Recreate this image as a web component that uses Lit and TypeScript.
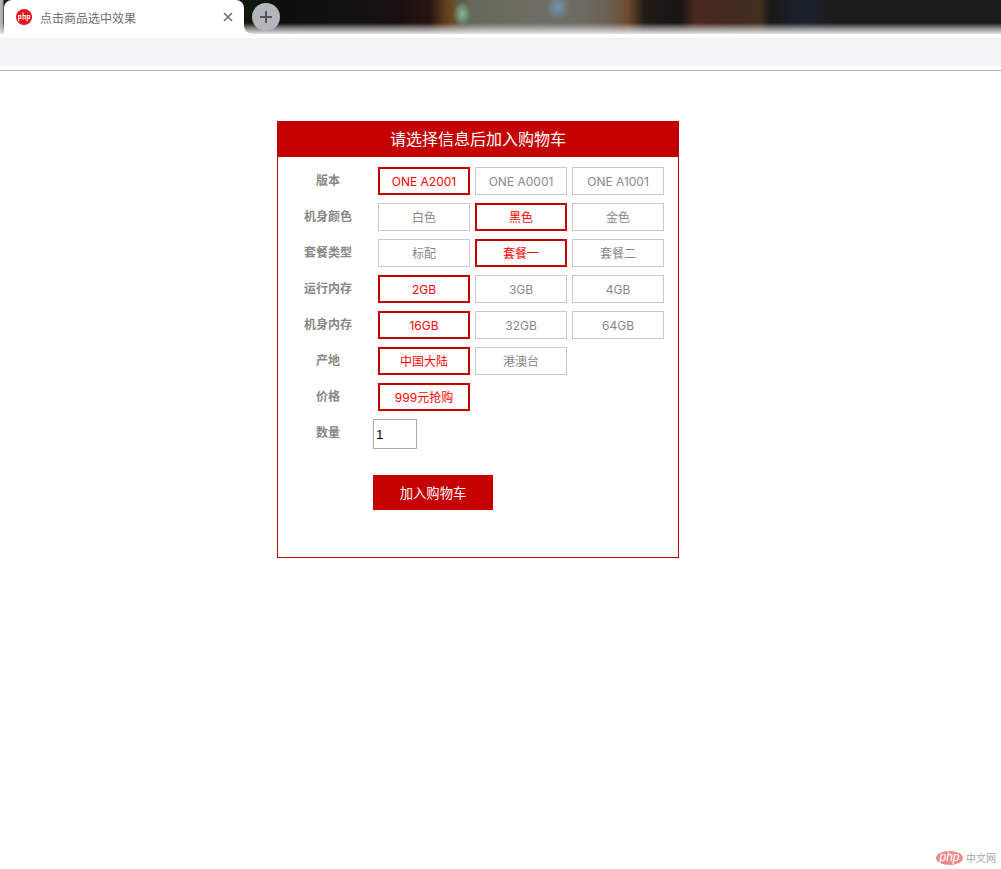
import { LitElement, html, css } from "lit";
import { customElement } from "lit/decorators.js";

interface Row { label: string; options: string[]; active: number; }

const ROWS: Row[] = [
  { label: "版本", options: ["ONE A2001", "ONE A0001", "ONE A1001"], active: 0 },
  { label: "机身颜色", options: ["白色", "黑色", "金色"], active: 1 },
  { label: "套餐类型", options: ["标配", "套餐一", "套餐二"], active: 1 },
  { label: "运行内存", options: ["2GB", "3GB", "4GB"], active: 0 },
  { label: "机身内存", options: ["16GB", "32GB", "64GB"], active: 0 },
  { label: "产地", options: ["中国大陆", "港澳台"], active: 0 },
  { label: "价格", options: ["999元抢购"], active: 0 },
];

@customElement("app-root")
export class AppRoot extends LitElement {
  static styles = css`
    :host {
      display: block;
      width: 1001px;
      height: 869px;
      position: relative;
      overflow: hidden;
      background: #fff;
      font-family: "Inter", "Noto Sans CJK SC", sans-serif;
    }
    .tabstrip {
      height: 34px;
      display: flex;
      align-items: flex-start;
      background:
        linear-gradient(to bottom, rgba(225,225,225,0) 0, rgba(225,225,225,0) 23px, rgba(190,190,190,.65) 28px, rgba(238,238,238,.95) 34px),
        radial-gradient(ellipse 9px 13px at 462px 14px, rgba(135,195,145,.95), rgba(135,195,145,0)),
        radial-gradient(ellipse 12px 13px at 558px 7px, rgba(115,150,180,.95), rgba(115,150,180,0)),
        linear-gradient(to right, #c0bcb8 0, #a0a0a0 3px, #1a1510 4px, #1a1510 244px, #0c1a0c 250px, #0e0e0e 285px, #111 340px, #1a0f10 400px, #251510 430px, #5f3d1c 445px, #6a4a22 452px, #5c5648 458px, #66685c 472px, #6f6e64 540px, #6c6c64 575px, #6b5f52 610px, #6f4a2e 628px, #201a16 645px, #181414 680px, #4a2a20 695px, #45281e 715px, #41301f 760px, #1b1918 770px, #1a2230 805px, #1c1c1c 830px, #1c1c1c 1001px);
    }
    .tabgap { height: 4px; background: #fff; }
    .tab {
      width: 240px;
      height: 38px;
      margin-left: 4px;
      box-sizing: border-box;
      flex: none;
      display: flex;
      align-items: center;
      background: #fff;
      border-radius: 8px 8px 0 0;
      padding: 0 11px 4px 12px;
      position: relative;
      z-index: 1;
    }
    .tab::after {
      content: "";
      position: absolute;
      left: 100%;
      bottom: 4px;
      width: 8px;
      height: 8px;
      background: radial-gradient(circle at 100% 0, transparent 7.5px, #fff 8px);
    }
    .favicon { flex: none; display: block; }
    .tabtitle {
      flex: 1;
      margin-left: 8px;
      font-size: 12px;
      color: #6b6f74;
      white-space: nowrap;
    }
    .close { flex: none; display: block; }
    .newtab {
      flex: none;
      display: block;
      margin: 3px 0 0 8px;
    }
    .toolbar { height: 28px; background: #f1f3f4; }
    .rule { height: 1px; margin-top: 4px; background: #b3b3b3; }
    .card {
      width: 402px;
      height: 437px;
      box-sizing: border-box;
      margin: 50px 0 0 277px;
      border: 1px solid #c40000;
    }
    .head {
      height: 35px;
      background: #c40000;
      color: #fff;
      font-size: 16px;
      line-height: 35px;
      text-align: center;
    }
    .rows { display: flex; flex-direction: column; gap: 8px; padding-top: 10px; }
    .row { display: flex; height: 28px; }
    .label {
      width: 100px;
      flex: none;
      text-align: center;
      font-size: 12px;
      font-weight: 700;
      line-height: 28px;
      color: #888;
    }
    .opts { display: flex; gap: 5px; }
    .opt {
      width: 92px;
      height: 28px;
      box-sizing: border-box;
      border: 1px solid #c8c8c8;
      font-size: 12px;
      line-height: 27px;
      text-align: center;
      color: #888;
    }
    .opt.on {
      border: 2px solid #c40000;
      line-height: 25px;
      color: #f00;
    }
    .qty { display: flex; height: 30px; margin-top: 8px; }
    .qty .label { line-height: 27px; }
    .qty input {
      width: 44px;
      height: 30px;
      box-sizing: border-box;
      margin: 0 0 0 -5px;
      padding: 1px 2px;
      border: 1px solid #a9a9a9;
      font: 13.33px "Liberation Sans", sans-serif;
      color: #000;
      background: #fff;
      border-radius: 0;
      outline: none;
    }
    .buy {
      display: block;
      width: 120px;
      height: 35px;
      margin: 26px 0 0 95px;
      padding: 0;
      border: 0;
      background: #c40000;
      color: #fff;
      font: 13.33px "Inter", "Noto Sans CJK SC", sans-serif;
    }
    .mark {
      position: absolute;
      right: 5px;
      bottom: 4px;
      display: flex;
      align-items: center;
      gap: 3px;
      color: #a8a8a8;
      font-size: 10px;
    }
    .php {
      width: 27px;
      height: 14px;
      border-radius: 50%;
      background: #f08a8a;
      color: #fff;
      font: italic 400 12px/13px "Liberation Sans", sans-serif;
      text-align: center;
    }
  `;

  render() {
    return html`
      <div class="tabstrip">
        <div class="tab">
          <svg class="favicon" width="16" height="16" viewBox="0 0 16 16">
            <circle cx="8" cy="8" r="8" fill="#e8141c"></circle>
            <path d="M2.6 6v6.5M2.6 6.5h2.2v3H2.6M7 3.5v7M7 6.5h2.2v4M11.2 6v6.5M11.2 6.5h2.2v3h-2.2" fill="none" stroke="#fff" stroke-width="1.1"></path>
          </svg>
          <span class="tabtitle">点击商品选中效果</span>
          <svg class="close" width="10" height="10" viewBox="0 0 10 10">
            <path d="M1 1l8 8M9 1l-8 8" stroke="#6b6f74" stroke-width="1.6"></path>
          </svg>
        </div>
        <svg class="newtab" width="28" height="28" viewBox="0 0 28 28">
          <circle cx="14" cy="14" r="14" fill="#b4b6bb"></circle>
          <path d="M14 8v12M8 14h12" stroke="#54575c" stroke-width="2"></path>
        </svg>
      </div>
      <div class="tabgap"></div>
      <div class="toolbar"></div>
      <div class="rule"></div>
      <div class="card">
        <div class="head">请选择信息后加入购物车</div>
        <div class="rows">
          ${ROWS.map(
            (r) => html`
              <div class="row">
                <div class="label">${r.label}</div>
                <div class="opts">
                  ${r.options.map(
                    (o, i) => html`<div class="opt ${i === r.active ? "on" : ""}">${o}</div>`
                  )}
                </div>
              </div>
            `
          )}
        </div>
        <div class="qty">
          <div class="label">数量</div>
          <input type="text" value="1" />
        </div>
        <button class="buy">加入购物车</button>
      </div>
      <div class="mark"><span class="php">php</span><span>中文网</span></div>
    `;
  }
}
